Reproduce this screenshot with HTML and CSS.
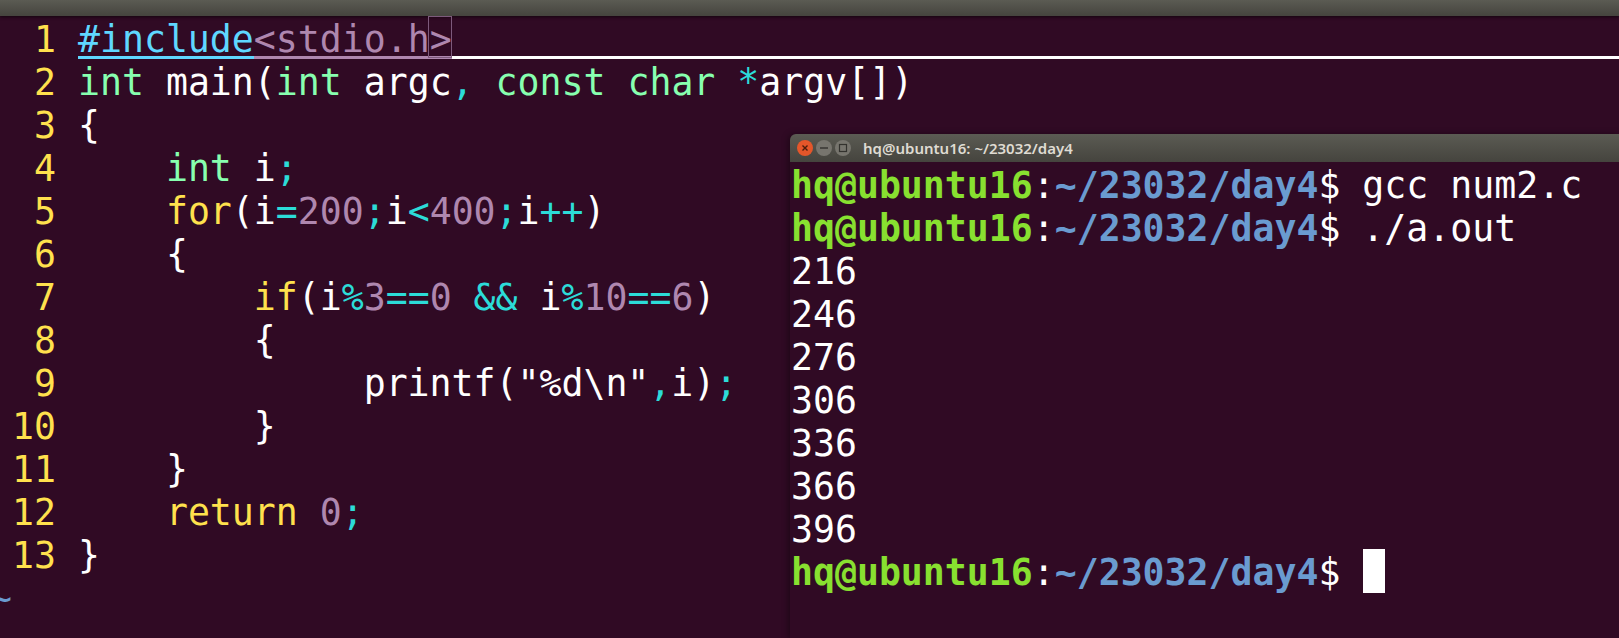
FILE: index.html
```
<!DOCTYPE html>
<html lang="en">
<head>
<meta charset="utf-8">
<title>vim and terminal</title>
<link rel="stylesheet" href="styles.css">
</head>
<body>
<div class="screen">
  <div class="topbar"></div>
  <div class="editor">
    <div class="line"><span class="num">1</span><div class="code cursorline"><span class="under pre">#include</span><span class="under con">&lt;stdio.h</span><span class="under con match">&gt;</span></div></div>
    <div class="line"><span class="num">2</span><div class="code"><span class="type">int</span> main(<span class="type">int</span> argc<span class="op">,</span> <span class="type">const</span> <span class="type">char</span> <span class="op">*</span>argv[])</div></div>
    <div class="line"><span class="num">3</span><div class="code">{</div></div>
    <div class="line"><span class="num">4</span><div class="code">    <span class="type">int</span> i<span class="op">;</span></div></div>
    <div class="line"><span class="num">5</span><div class="code">    <span class="stm">for</span>(i<span class="op">=</span><span class="con">200</span><span class="op">;</span>i<span class="op">&lt;</span><span class="con">400</span><span class="op">;</span>i<span class="op">++</span>)</div></div>
    <div class="line"><span class="num">6</span><div class="code">    {</div></div>
    <div class="line"><span class="num">7</span><div class="code">        <span class="stm">if</span>(i<span class="op">%</span><span class="con">3</span><span class="op">==</span><span class="con">0</span> <span class="op">&amp;&amp;</span> i<span class="op">%</span><span class="con">10</span><span class="op">==</span><span class="con">6</span>)</div></div>
    <div class="line"><span class="num">8</span><div class="code">        {</div></div>
    <div class="line"><span class="num">9</span><div class="code">             printf("%d\n"<span class="op">,</span>i)<span class="op">;</span></div></div>
    <div class="line"><span class="num">10</span><div class="code">        }</div></div>
    <div class="line"><span class="num">11</span><div class="code">    }</div></div>
    <div class="line"><span class="num">12</span><div class="code">    <span class="stm">return</span> <span class="con">0</span><span class="op">;</span></div></div>
    <div class="line"><span class="num">13</span><div class="code">}</div></div>
    <div class="line tilde">~</div>
  </div>
  <div class="terminal">
    <div class="titlebar">
      <svg class="winbtns" width="56" height="18" viewBox="0 0 56 18" aria-hidden="true">
        <circle cx="9" cy="9" r="8" fill="#e4562a"/>
        <path d="M6.5 6.5l5 5M11.5 6.5l-5 5" stroke="#4a1c0c" stroke-width="1.4"/>
        <circle cx="28" cy="9" r="8" fill="#77756e"/>
        <path d="M24 9h8" stroke="#33322e" stroke-width="1.4"/>
        <circle cx="47" cy="9" r="8" fill="#77756e"/>
        <rect x="43.5" y="5.5" width="7" height="7" fill="none" stroke="#33322e" stroke-width="1.2"/>
      </svg>
      <span class="wintitle">hq@ubuntu16: ~/23032/day4</span>
    </div>
    <div class="termbody">
      <div class="tline"><span class="host">hq@ubuntu16</span>:<span class="path">~/23032/day4</span>$ gcc num2.c</div>
      <div class="tline"><span class="host">hq@ubuntu16</span>:<span class="path">~/23032/day4</span>$ ./a.out</div>
      <div class="tline">216</div>
      <div class="tline">246</div>
      <div class="tline">276</div>
      <div class="tline">306</div>
      <div class="tline">336</div>
      <div class="tline">366</div>
      <div class="tline">396</div>
      <div class="tline"><span class="host">hq@ubuntu16</span>:<span class="path">~/23032/day4</span>$ <span class="cursor"> </span></div>
    </div>
  </div>
</div>
</body>
</html>
```
FILE: styles.css
```
* { box-sizing: border-box; }
html, body { margin: 0; padding: 0; background: #300a24; }
.screen {
  position: relative;
  width: 1619px;
  height: 638px;
  overflow: hidden;
  background: #300a24;
  color: #fff;
  font-family: "DejaVu Sans Mono", "Liberation Mono", monospace;
  font-size: 36.5px;
  display: flex;
  flex-direction: column;
}
.topbar {
  height: 16px;
  flex: none;
  background: linear-gradient(#5b5b53, #45443e);
  box-shadow: 0 1px 3px rgba(0,0,0,.6);
}
.editor { flex: 1; }
.line {
  display: flex;
  height: 43px;
  line-height: 48px;
  white-space: pre;
}
.num {
  flex: none;
  width: 78px;
  padding-right: 22px;
  text-align: right;
  color: #ffe14d;
}
.code { flex: 1; }
.cursorline {
  display: flex;
  height: 43px;
  border-bottom: 3px solid #fff;
}
.under { height: 43px; border-bottom: 3px solid currentColor; }
.match { position: relative; }
.match::after {
  content: "";
  position: absolute;
  left: -2px; right: 0; top: 0; bottom: -2px;
  border: 1px solid #7d5a7c;
}
.pre { color: #5fd7ff; }
.con { color: #af87af; }
.type { color: #87ffaf; }
.stm { color: #ffe14d; }
.op { color: #2cdcd8; }
.tilde { margin-left: -10px; color: #6a9bd0; }
.terminal {
  position: absolute;
  left: 790px;
  top: 134px;
  right: 0;
  bottom: 0;
  background: #300a24;
  border-radius: 6px 0 0 0;
  box-shadow: -2px 0 6px rgba(0,0,0,.35);
}
.titlebar {
  height: 28px;
  display: flex;
  align-items: center;
  padding-left: 6px;
  gap: 11px;
  border-radius: 6px 0 0 0;
  background: linear-gradient(#5b5b53, #45443e);
}
.winbtns { flex: none; }
.wintitle {
  font-family: "Noto Sans", sans-serif;
  font-size: 15px;
  font-weight: 600;
  color: #dfdbd2;
}
.termbody { padding-left: 1px; }
.tline { height: 43px; line-height: 47px; white-space: pre; }
.host { color: #88e030; font-weight: bold; }
.path { color: #6a9bd0; font-weight: bold; }
.cursor { display: inline-block; width: 22px; height: 44px; margin-left: 1px; background: #fff; vertical-align: top; }
```
